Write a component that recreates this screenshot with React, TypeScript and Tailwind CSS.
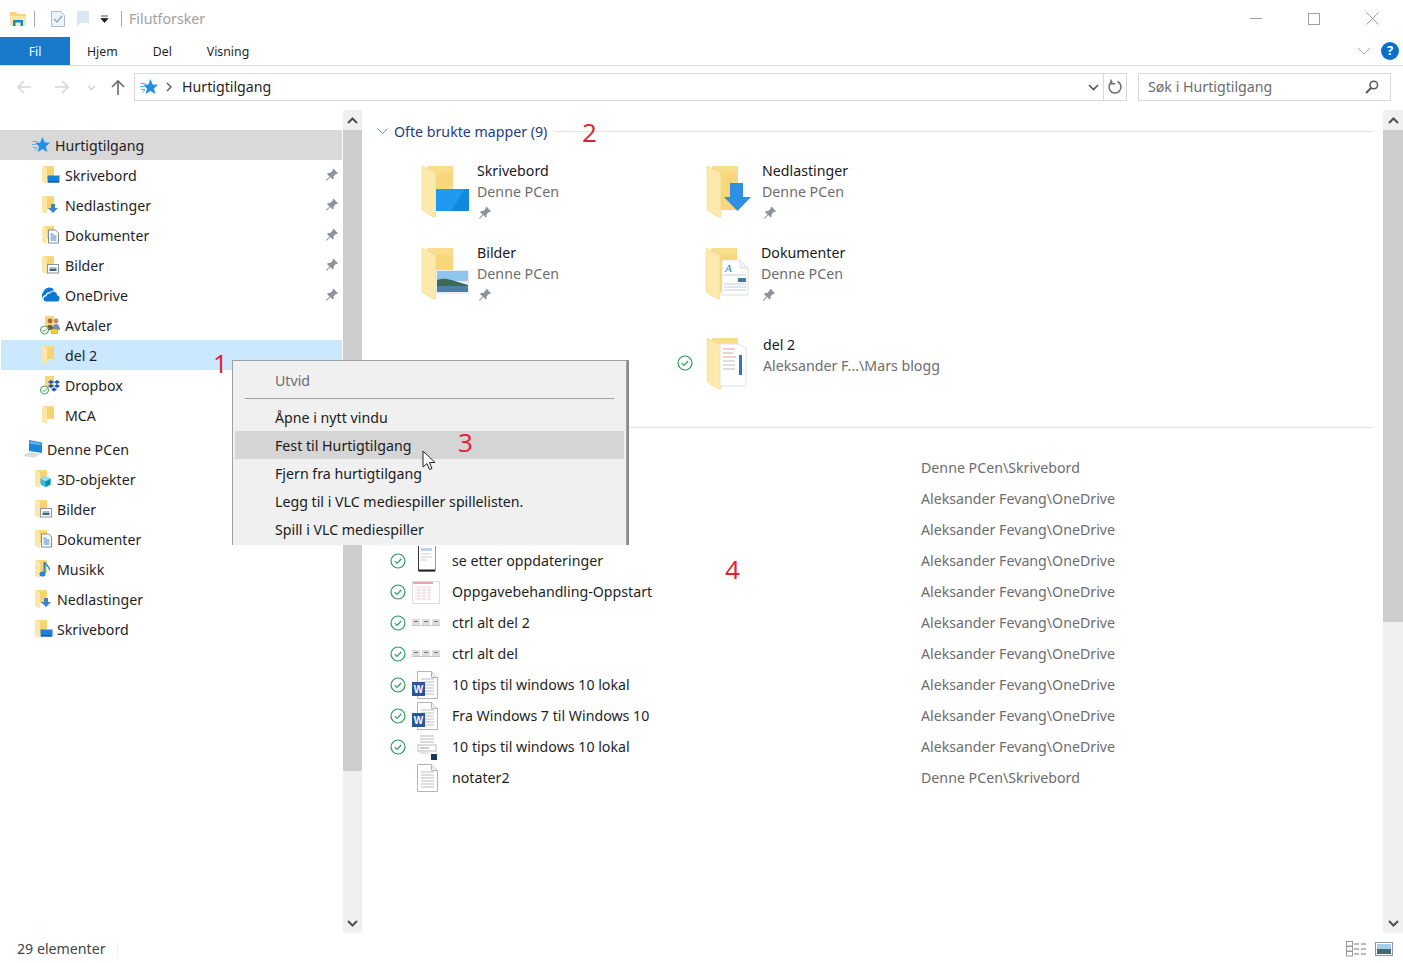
import { ReactNode } from 'react';

type Overlay =
  | 'desktop'
  | 'download'
  | 'docs'
  | 'pictures'
  | 'music'
  | 'cube'
  | 'shared'
  | 'dropbox'
  | 'none';

function Check({ size = 16 }: { size?: number }) {
  return (
    <svg width={size} height={size} viewBox="0 0 16 16" fill="none">
      <circle cx="8" cy="8" r="7" stroke="#2a9d57" strokeWidth="1.2" fill="#fff" />
      <path d="M4.8 8.2l2.2 2.2 4.2-4.4" stroke="#2a9d57" strokeWidth="1.2" />
    </svg>
  );
}

function Pin({ size = 14 }: { size?: number }) {
  return (
    <svg width={size} height={size} viewBox="0 0 14 14">
      <path d="M8.6 0.8l4.6 4.6-1.3 0.7-0.8-0.3-2.6 2.6 0.2 2.2-1 1-2.5-2.6-3.4 3.8-0.8-0.7 3.500-3.700-2.500-2.500 1-1 2.200 0.200 2.600-2.600-0.300-0.800z" fill="#8d949c" />
    </svg>
  );
}

function Star({ size = 18 }: { size?: number }) {
  return (
    <svg width={size} height={size} viewBox="0 0 18 18">
      <path d="M10.500 1l2.200 5.500 5.300 0.300-4 3.600 1.300 5.600-4.800-3-4.800 3 1.300-5.600-4-3.600 5.300-0.300z" fill="#2490e4" />
      <path d="M0.500 5.500h5M0 8.500h4M1 11.500h4M2.500 14.500l2.500-2" stroke="#5aaeea" strokeWidth="1" />
    </svg>
  );
}

function SmallFolder({ overlay = 'none' }: { overlay?: Overlay }) {
  return (
    <svg width="20" height="20" viewBox="0 0 20 20">
      <path d="M3 1h10v13H3z" fill="#f9da7f" />
      <path d="M1 1l5 2v16l-5-2z" fill="#fbe7a8" />
      <path d="M6 3h7v11H6z" fill="#f7d36f" />
      {overlay === 'desktop' && (
        <g>
          <rect x="6.500" y="10.500" width="12" height="7" fill="#1a83d8" />
          <rect x="7" y="16" width="11" height="1.500" fill="#0f5ea8" />
        </g>
      )}
      {overlay === 'download' && <path d="M10 9h4v4h3l-5 5-5-5h3z" fill="#3f83c8" />}
      {overlay === 'docs' && (
        <g>
          <path d="M7.500 5h7l3 3v10h-10z" fill="#fff" stroke="#7c8a96" />
          <path d="M9.500 9h3M9.500 11h6M9.500 13h6M9.500 15h6" stroke="#3d83c6" />
        </g>
      )}
      {overlay === 'pictures' && (
        <g>
          <rect x="6.500" y="9.500" width="11" height="8.500" fill="#fff" stroke="#8b959e" />
          <rect x="8.500" y="12" width="7" height="1" fill="#9cc4e4" />
          <rect x="8.500" y="13.500" width="7" height="2.500" fill="#47627c" />
        </g>
      )}
      {overlay === 'music' && (
        <g>
          <path d="M10.500 3v11" stroke="#1e88d8" strokeWidth="2" />
          <path d="M10.500 3c1 3 5 4 5 8" stroke="#1e88d8" strokeWidth="1.500" fill="none" />
          <ellipse cx="8.500" cy="15" rx="3" ry="2.600" fill="#1e88d8" />
        </g>
      )}
      {overlay === 'cube' && (
        <g>
          <path d="M11.500 7l5 2.600v6l-5 2.600-5-2.600v-6z" fill="#34bdd8" />
          <path d="M11.500 12.200l5-2.600v6l-5 2.600z" fill="#0f8fb0" />
          <path d="M11.500 7l5 2.600-5 2.600-5-2.600z" fill="#9ae4f0" />
        </g>
      )}
    </svg>
  );
}

function Nav({ kind }: { kind: Overlay | 'onedrive' | 'avtaler' | 'pc' | 'star' }) {
  if (kind === 'star') return <Star />;
  if (kind === 'onedrive')
    return (
      <svg width="19" height="16" viewBox="0 0 19 16">
        <path d="M2 5.500C3 2 6 0.500 8.500 0.500c2 0 3.800 1.200 4.500 3-2-0.300-3.500 0.500-4.300 2-1.800-0.500-3.500 0.300-4 2.500-1.500 0-3 1-3 3C0.500 9.500 0.500 7 2 5.500z" fill="#0a78d4" />
        <path d="M5.500 14.500c-1.800 0-3-1-3-2.700 0-1.500 1.200-2.600 3-2.600 0.200-2 1.800-3 3.500-2.500 0.800-1.700 2.500-2.400 4.300-2 1.800 0.400 3 2 2.700 3.800 1.500 0 2.500 1.100 2.500 3 0 1.800-1.200 3-2.500 3z" fill="#0a78d4" />
      </svg>
    );
  if (kind === 'avtaler')
    return (
      <svg width="22" height="20" viewBox="0 0 22 20">
        <path d="M5 1h9v12H5z" fill="#f7d67a" />
        <circle cx="10" cy="6" r="2.400" fill="#a86a3c" />
        <path d="M6.500 15c0-3 1-5 3.500-5s3.500 2 3.500 5z" fill="#6e5a46" />
        <circle cx="16" cy="6" r="2.400" fill="#c68a58" />
        <path d="M12.500 15c0-3 1-6 3.500-6s4 3 4 6z" fill="#6a8fb5" />
        <rect x="11.500" y="14" width="6" height="4.500" fill="#f6cf2f" stroke="#a8891e" strokeWidth="0.500" />
        <circle cx="4.500" cy="15" r="4" fill="#fff" stroke="#3aa04c" />
        <path d="M2.500 15l1.500 1.500 3-3" stroke="#3aa04c" fill="none" />
      </svg>
    );
  if (kind === 'dropbox')
    return (
      <svg width="22" height="20" viewBox="0 0 22 20">
        <path d="M5 1h9v12H5z" fill="#f7d67a" />
        <path d="M11 5l3 2-3 2-3-2zM17 5l3 2-3 2-3-2zM11 9l3 2-3 2-3-2zM17 9l3 2-3 2-3-2zM14 12.500l3 2-3 2-3-2z" fill="#1b57c0" />
        <circle cx="4.500" cy="15" r="4" fill="#fff" stroke="#3aa04c" />
        <path d="M2.500 15l1.500 1.500 3-3" stroke="#3aa04c" fill="none" />
      </svg>
    );
  if (kind === 'pc')
    return (
      <svg width="21" height="20" viewBox="0 0 21 20">
        <path d="M7 1l13 2.500v10.500l-13-2z" fill="#1d86d6" />
        <path d="M7.500 2l11.500 2.200v2l-11.500-1.500z" fill="#5eb4ee" />
        <path d="M7 13l12 2-7 3.500-11-1.500z" fill="#d8dadc" />
      </svg>
    );
  return <SmallFolder overlay={kind} />;
}

const quick: { name: string; kind: Parameters<typeof Nav>[0]['kind']; pinned?: boolean; selected?: boolean }[] = [
  { name: 'Skrivebord', kind: 'desktop', pinned: true },
  { name: 'Nedlastinger', kind: 'download', pinned: true },
  { name: 'Dokumenter', kind: 'docs', pinned: true },
  { name: 'Bilder', kind: 'pictures', pinned: true },
  { name: 'OneDrive', kind: 'onedrive', pinned: true },
  { name: 'Avtaler', kind: 'avtaler' },
  { name: 'del 2', kind: 'none', selected: true },
  { name: 'Dropbox', kind: 'dropbox' },
  { name: 'MCA', kind: 'none' },
];

const pcItems: { name: string; kind: Overlay }[] = [
  { name: '3D-objekter', kind: 'cube' },
  { name: 'Bilder', kind: 'pictures' },
  { name: 'Dokumenter', kind: 'docs' },
  { name: 'Musikk', kind: 'music' },
  { name: 'Nedlastinger', kind: 'download' },
  { name: 'Skrivebord', kind: 'desktop' },
];

function BigFolder({ children }: { children?: ReactNode }) {
  return (
    <svg width="50" height="54" viewBox="0 0 50 54" className="shrink-0">
      <path d="M6 1h26v44H12z" fill="#f9dd8a" />
      <path d="M12 8h20v37H12z" fill="#f8d77c" />
      <path d="M1 1l14 7v44l-3 0-11-7z" fill="#fce9ae" />
      <path d="M1 1l14 7v44l-3 0-11-7z" fill="none" stroke="#efd07a" strokeWidth="0.500" />
      {children}
    </svg>
  );
}

function Tile({ name, sub, className = '', children }: { name: string; sub: string; className?: string; children?: ReactNode }) {
  return (
    <div className={`flex w-[285px] h-[82px] shrink-0 ${className}`}>
      <div className="pt-[5px] w-[56px] shrink-0">
        <BigFolder>{children}</BigFolder>
      </div>
      <div className="flex flex-col">
        <span className="h-[21px] leading-[21px] text-[#1a1a1a]">{name}</span>
        <span className="h-[21px] leading-[21px] text-[#6d6d6d]">{sub}</span>
        <span className="h-[21px] flex items-center pl-[1px]">
          <Pin size={14} />
        </span>
      </div>
    </div>
  );
}

function DocIcon({ children }: { children?: ReactNode }) {
  return (
    <svg width="30" height="30" viewBox="0 0 30 30">
      <path d="M5.500 1.500h14l6 6v21h-20z" fill="#fff" stroke="#b4b4b4" />
      <path d="M19.500 1.500v6h6" fill="#eee" stroke="#b4b4b4" />
      <path d="M9 9h13M9 12h13M9 15h13M9 18h13M9 21h13M9 24h13" stroke="#bdbdbd" />
      {children}
    </svg>
  );
}

function WordIcon() {
  return (
    <DocIcon>
      <rect x="0" y="12" width="13" height="14" fill="#2b579a" />
      <text x="6.500" y="22.500" textAnchor="middle" fontSize="10" fontWeight="700" fill="#fff" fontFamily="Liberation Sans, sans-serif">
        W
      </text>
    </DocIcon>
  );
}

function KeysIcon() {
  return (
    <svg width="30" height="30" viewBox="0 0 30 30">
      <rect x="0" y="11" width="8" height="6" fill="#ddd" />
      <rect x="10" y="11" width="8" height="6" fill="#ddd" />
      <rect x="20" y="11" width="8" height="6" fill="#ddd" />
      <path d="M2 13.500h4M12 13.500h4M22 13.500h4" stroke="#777" />
      <path d="M0 17.500h28" stroke="#c6c6c6" />
    </svg>
  );
}

function DeviceIcon() {
  return (
    <svg width="30" height="30" viewBox="0 0 30 30">
      <rect x="6.500" y="-1" width="17" height="26" fill="#fff" stroke="#999" />
      <path d="M7 24.500h16" stroke="#222" strokeWidth="2" />
      <path d="M6.500 0v25" stroke="#333" />
      <path d="M9 2h11v3H9z" fill="#b8d4ee" />
      <path d="M9 8h9M9 11h11M9 14h6" stroke="#ccc" />
    </svg>
  );
}

function SheetIcon() {
  return (
    <svg width="30" height="30" viewBox="0 0 30 30">
      <rect x="0.500" y="4.500" width="27" height="22" fill="#fff" stroke="#dcdcdc" />
      <path d="M1 6h20" stroke="#e7a6a6" strokeWidth="2" />
      <path d="M3 10h16M3 13h16M3 16h16M3 19h16M3 22h16M7 9v15M12 9v15M17 9v15" stroke="#f0dcdc" />
    </svg>
  );
}

function ThumbIcon() {
  return (
    <svg width="30" height="30" viewBox="0 0 30 30">
      <path d="M8 4h14M8 7h14M8 10h14" stroke="#cfcfcf" strokeWidth="1.500" />
      <rect x="6" y="13" width="18" height="6" fill="#fff" stroke="#bbb" />
      <path d="M8 16h9" stroke="#999" />
      <path d="M8 21h9" stroke="#ccc" />
      <rect x="19" y="22" width="6" height="6" fill="#123b66" />
    </svg>
  );
}

const rows: { name: string; path: string; icon?: ReactNode; synced?: boolean }[] = [
  { name: '', path: 'Denne PCen\\Skrivebord' },
  { name: '', path: 'Aleksander Fevang\\OneDrive' },
  { name: '', path: 'Aleksander Fevang\\OneDrive' },
  { name: 'se etter oppdateringer', path: 'Aleksander Fevang\\OneDrive', icon: <DeviceIcon />, synced: true },
  { name: 'Oppgavebehandling-Oppstart', path: 'Aleksander Fevang\\OneDrive', icon: <SheetIcon />, synced: true },
  { name: 'ctrl alt del 2', path: 'Aleksander Fevang\\OneDrive', icon: <KeysIcon />, synced: true },
  { name: 'ctrl alt del', path: 'Aleksander Fevang\\OneDrive', icon: <KeysIcon />, synced: true },
  { name: '10 tips til windows 10 lokal', path: 'Aleksander Fevang\\OneDrive', icon: <WordIcon />, synced: true },
  { name: 'Fra Windows 7 til Windows 10', path: 'Aleksander Fevang\\OneDrive', icon: <WordIcon />, synced: true },
  { name: '10 tips til windows 10 lokal', path: 'Aleksander Fevang\\OneDrive', icon: <ThumbIcon />, synced: true },
  { name: 'notater2', path: 'Denne PCen\\Skrivebord', icon: <DocIcon /> },
];

function Chevron({ up = false, className = '' }: { up?: boolean; className?: string }) {
  return (
    <svg width="11" height="7" viewBox="0 0 11 7" className={className}>
      <path d={up ? 'M1 6l4.500-4.500L10 6' : 'M1 1l4.500 4.500L10 1'} fill="none" stroke="#505050" strokeWidth="2" />
    </svg>
  );
}

function ScrollBar({ width, thumb }: { width: string; thumb: string }) {
  return (
    <div className={`${width} shrink-0 bg-[#f0f0f0] flex flex-col`}>
      <div className="h-[20px] flex items-center justify-center shrink-0">
        <Chevron up />
      </div>
      <div className={`${thumb} bg-[#cdcdcd] shrink-0`} />
      <div className="flex-1" />
      <div className="h-[20px] flex items-center justify-center shrink-0">
        <Chevron />
      </div>
    </div>
  );
}

function Arrow({ dir, color }: { dir: 'left' | 'right' | 'up'; color: string }) {
  const d = {
    left: 'M15 8H2M8 2L2 8l6 6',
    right: 'M1 8h13M8 2l6 6-6 6',
    up: 'M8 16V2M2 8l6-6 6 6',
  }[dir];
  return (
    <svg width="16" height="17" viewBox="0 0 16 17">
      <path d={d} fill="none" stroke={color} strokeWidth="1.600" />
    </svg>
  );
}

function Mark({ className, children }: { className: string; children: string }) {
  return <span className={`absolute text-[#e2202c] text-[26px] leading-none font-medium font-['Open_Sans'] ${className}`}>{children}</span>;
}

export default function App() {
  return (
    <div className="relative w-[1403px] h-[963px] overflow-hidden bg-white flex flex-col text-[14.2px] font-['Noto_Sans','Open_Sans',sans-serif] text-[#1f1f1f]">
      {/* tittellinje */}
      <div className="h-[37px] flex items-center shrink-0">
        <div className="ml-[9px] w-[18px] h-[18px]">
          <svg width="18" height="18" viewBox="0 0 18 18">
            <path d="M1 2h6l1.500 2H17v12H1z" fill="#f7d774" />
            <path d="M1 6h16v10H1z" fill="#fbe7a6" />
            <path d="M4 16v-6h10v6h-2.500v-3.500h-5V16z" fill="#1b87c9" />
          </svg>
        </div>
        <div className="ml-[7px] w-px h-[16px] bg-[#a8a8a8]" />
        <div className="ml-[15px]">
          <svg width="16" height="18" viewBox="0 0 16 18">
            <path d="M1.500 1.500h9l4 4v11h-13z" fill="#eef3fa" stroke="#a9bbd6" />
            <path d="M4 9l3 3 5-6" fill="none" stroke="#8ba3c4" strokeWidth="1.300" />
          </svg>
        </div>
        <div className="ml-[10px]">
          <svg width="14" height="18" viewBox="0 0 14 18">
            <path d="M1 1h8l4 0v12H5l-4 4z" fill="#dbe5f3" />
          </svg>
        </div>
        <div className="ml-[10px] w-[9px]">
          <svg width="9" height="8" viewBox="0 0 9 8">
            <path d="M1 1h7M1 3.500h7L4.500 7.500z" fill="#222" stroke="#222" strokeWidth="0.800" />
          </svg>
        </div>
        <div className="ml-[12px] w-px h-[16px] bg-[#a8a8a8]" />
        <span className="ml-[7px] text-[#a0a0a0]">Filutforsker</span>
        <div className="ml-auto flex items-center pr-[24px] gap-[46px]">
          <div className="w-[12px] h-px bg-[#a0a0a0]" />
          <div className="w-[12px] h-[12px] border border-[#a0a0a0]" />
          <svg width="13" height="13" viewBox="0 0 13 13">
            <path d="M0.500 0.500l12 12M12.500 0.500l-12 12" stroke="#a0a0a0" />
          </svg>
        </div>
      </div>

      {/* fanelinje */}
      <div className="h-[29px] flex items-center border-b border-[#dadbdc] text-[12.3px] shrink-0">
        <div className="w-[70px] h-[28px] pt-[2px] bg-[#1979ca] text-white flex items-center justify-center">Fil</div>
        <span className="ml-[17px] pt-[2px]">Hjem</span>
        <span className="ml-[35px] pt-[2px]">Del</span>
        <span className="ml-[35px] pt-[2px]">Visning</span>
        <div className="ml-auto flex items-center pr-[4px] gap-[10px]">
          <svg width="14" height="8" viewBox="0 0 14 8">
            <path d="M1 1l6 6 6-6" fill="none" stroke="#a8a8a8" />
          </svg>
          <div className="w-[18px] h-[18px] rounded-full bg-[#0a6fc9] text-white text-[13px] font-bold flex items-center justify-center">?</div>
        </div>
      </div>

      {/* adressefelt */}
      <div className="h-[44px] flex items-start pt-[7px] shrink-0">
        <div className="ml-[16px] mt-[6px]"><Arrow dir="left" color="#d6d6d6" /></div>
        <div className="ml-[22px] mt-[6px]"><Arrow dir="right" color="#d6d6d6" /></div>
        <div className="ml-[17px] mt-[12px]">
          <svg width="9" height="6" viewBox="0 0 9 6"><path d="M1 1l3.500 3.500L8 1" fill="none" stroke="#d0d0d0" strokeWidth="1.300" /></svg>
        </div>
        <div className="ml-[14px] mt-[6px]"><Arrow dir="up" color="#6b6b6b" /></div>
        <div className="ml-[8px] w-[993px] h-[28px] border border-[#d9d9d9] flex items-center">
          <div className="ml-[5px]"><Star /></div>
          <svg width="7" height="10" viewBox="0 0 7 10" className="ml-[8px]"><path d="M1 1l4 4-4 4" fill="none" stroke="#555" strokeWidth="1.300" /></svg>
          <span className="ml-[9px]">Hurtigtilgang</span>
          <svg width="11" height="7" viewBox="0 0 11 7" className="ml-auto mr-[4px]"><path d="M1 1l4.500 4.500L10 1" fill="none" stroke="#555" strokeWidth="1.600" /></svg>
          <div className="w-px h-full bg-[#d9d9d9]" />
          <div className="w-[22px] flex justify-center">
            <svg width="16" height="16" viewBox="0 0 16 16">
              <path d="M5.500 2.500a6 6 0 1 0 5 0" fill="none" stroke="#6b6b6b" strokeWidth="1.500" />
              <path d="M4 0.500v4.200h4.200" fill="none" stroke="#6b6b6b" strokeWidth="1.400" />
            </svg>
          </div>
        </div>
        <div className="ml-[11px] w-[253px] h-[28px] border border-[#d9d9d9] flex items-center pl-[9px] text-[#6d6d6d]">
          <span>Søk i Hurtigtilgang</span>
          <svg width="14" height="14" viewBox="0 0 14 14" className="ml-auto mr-[11px]">
            <circle cx="8.800" cy="5" r="3.800" fill="none" stroke="#555" strokeWidth="1.500" />
            <path d="M6 8L1 13" stroke="#555" strokeWidth="2" />
          </svg>
        </div>
      </div>

      {/* hovedområde */}
      <div className="h-[823px] flex shrink-0">
        <div className="w-[343px] shrink-0 pt-[20px] pr-px">
          <div className="h-[30px] bg-[#d9d9d9] flex items-center pl-[32px] gap-[5px]">
            <Star />
            <span className="pt-[2px]">Hurtigtilgang</span>
          </div>
          {quick.map((item) => (
            <div key={item.name} className={`h-[30px] flex items-center ${item.selected ? 'bg-[#cce8ff] ml-px' : ''}`}>
              <div className={`${item.selected ? 'w-[41px]' : 'w-[42px]'} shrink-0`} />
              <div className="w-[23px] shrink-0 flex justify-center -ml-[3px]">
                <Nav kind={item.kind} />
              </div>
              <span className="ml-[3px] pt-[2px]">{item.name}</span>
              {item.pinned && (
                <span className="ml-auto mr-[3px]">
                  <Pin />
                </span>
              )}
            </div>
          ))}
          <div className="h-[30px] mt-[4px] flex items-center pl-[22px] gap-[4px]">
            <Nav kind="pc" />
            <span className="pt-[2px]">Denne PCen</span>
          </div>
          {pcItems.map((item) => (
            <div key={item.name} className="h-[30px] flex items-center pl-[34px] gap-[3px]">
              <Nav kind={item.kind} />
              <span className="pt-[2px]">{item.name}</span>
            </div>
          ))}
        </div>
        <ScrollBar width="w-[19px]" thumb="h-[641px]" />

        <div className="flex-1 min-w-0 pt-[10px] pr-[10px]">
          <div className="h-[22px] flex items-center pl-[15px]">
            <svg width="11" height="7" viewBox="0 0 11 7"><path d="M0.500 0.500l5 5 5-5" fill="none" stroke="#7a8aa8" /></svg>
            <span className="ml-[6px] pt-[2px] text-[#1f3b8a]">Ofte brukte mapper (9)</span>
            <div className="ml-[8px] flex-1 h-px bg-[#e2e2e2]" />
          </div>
          <div className="mt-[18px] pl-[59px] flex flex-wrap w-[640px]">
            <Tile name="Skrivebord" sub="Denne PCen">
              <rect x="15" y="24" width="33" height="22" fill="#1e9af0" />
              <path d="M30 46l14-22h4v22z" fill="#1187e0" />
            </Tile>
            <Tile name="Nedlastinger" sub="Denne PCen">
              <path d="M24 18h13v14h8L31.500 46 18 32h6z" fill="#2f8fe4" />
            </Tile>
            <Tile name="Bilder" sub="Denne PCen">
              <rect x="15" y="23" width="33" height="24" fill="#e8eef4" />
              <rect x="16" y="24" width="31" height="10" fill="#8fc4ec" />
              <path d="M16 33c8-3 14 0 31 5v2H16z" fill="#3a6a52" />
              <rect x="16" y="39" width="31" height="6" fill="#4d7fa8" />
            </Tile>
            <Tile name="Dokumenter" sub="Denne PCen" className="-ml-px">
              <path d="M17 13h18l8 8v27H17z" fill="#fff" stroke="#d8dfe6" />
              <path d="M35 13v8h8" fill="#eef2f6" stroke="#d8dfe6" />
              <text x="20" y="25" fontSize="11" fontStyle="italic" fill="#2c7cc8" fontFamily="Liberation Serif, serif">A</text>
              <path d="M19 28h22M19 37h22M19 40h22M19 43h22" stroke="#b9d0e4" />
              <rect x="33" y="31" width="8" height="4" fill="#46789e" />
            </Tile>
          </div>
          <div className="mt-[10px] pl-[315px] flex items-start h-[76px]">
            <div className="mt-[21px] w-[29px] shrink-0">
              <Check />
            </div>
            <div className="pt-[3px] w-[57px] shrink-0">
              <BigFolder>
                <path d="M14 7h18l8 4v38H14z" fill="#fff" stroke="#dde2e6" />
                <path d="M17 12h12M17 16h10M17 20h13" stroke="#e3a0a0" />
                <path d="M17 24h12M17 28h12M17 32h12" stroke="#bbb" />
                <rect x="33" y="18" width="3" height="20" fill="#2a78c8" />
              </BigFolder>
            </div>
            <div className="flex flex-col">
              <span className="h-[21px] leading-[21px] text-[#1a1a1a]">del 2</span>
              <span className="h-[21px] leading-[21px] text-[#6d6d6d]">Aleksander F...\Mars blogg</span>
            </div>
          </div>
          <div className="mt-[17px] h-px bg-[#e2e2e2]" />
          <div className="mt-[24px]">
            {rows.map((row, i) => (
              <div key={i} className="h-[31px] flex items-center">
                <div className="w-[28px] ml-[28px] shrink-0">{row.synced && <Check />}</div>
                <div className="w-[30px] h-[30px] -ml-[6px] shrink-0">{row.icon}</div>
                <span className="ml-[10px] w-[469px] shrink-0">{row.name}</span>
                <span className="text-[#6d6d6d]">{row.path}</span>
              </div>
            ))}
          </div>
        </div>
        <ScrollBar width="w-[20px]" thumb="h-[492px]" />
      </div>

      {/* statuslinje */}
      <div className="flex-1 flex items-center pl-[17px] pt-[2px] text-[#444]">
        <span>29 elementer</span>
        <div className="ml-[11px] w-px h-[14px] bg-[#efefef]" />
        <div className="ml-auto flex items-center gap-[9px] pr-[10px]">
          <svg width="20" height="16" viewBox="0 0 20 16">
            <rect x="0.500" y="0.500" width="6" height="4.500" fill="#fff" stroke="#9a9a9a" />
            <rect x="0.500" y="5.500" width="6" height="4.500" fill="#fff" stroke="#9a9a9a" />
            <rect x="0.500" y="10.500" width="6" height="4.500" fill="#fff" stroke="#9a9a9a" />
            <path d="M8 3h5M15 3h5M8 8h5M15 8h5M8 13h5M15 13h5" stroke="#777" />
          </svg>
          <svg width="18" height="14" viewBox="0 0 18 14">
            <rect x="0.500" y="0.500" width="17" height="13" fill="#fff" stroke="#8a97a5" />
            <rect x="2" y="2" width="14" height="5" fill="#a8cdec" />
            <rect x="2" y="7" width="14" height="5" fill="#3f6b6a" />
          </svg>
        </div>
      </div>

      {/* hurtigmeny */}
      <div className="absolute left-[232px] top-[360px] w-[395px] h-[185px] bg-[#f0f0f0] border-t border-x border-[#a0a0a0] shadow-[2px_0_0_#8c8c8c] flex flex-col overflow-hidden">
        <div className="h-[37px] shrink-0 flex items-center pl-[42px] pt-[3px] text-[#6d6d6d]">Utvid</div>
        <div className="h-px mx-[12px] bg-[#a0a0a0] shrink-0" />
        <div className="mt-[4px] flex flex-col mx-[2px] text-[#1a1a1a]">
          {['Åpne i nytt vindu', 'Fest til Hurtigtilgang', 'Fjern fra hurtigtilgang', 'Legg til i VLC mediespiller spillelisten.', 'Spill i VLC mediespiller'].map((label, i) => (
            <div key={label} className={`h-[28px] shrink-0 flex items-center pl-[40px] pt-[2px] ${i === 1 ? 'bg-[#d5d5d5]' : ''}`}>
              {label}
            </div>
          ))}
        </div>
      </div>

      {/* musepeker */}
      <svg width="14" height="21" viewBox="0 0 14 21" className="absolute left-[422px] top-[450px]">
        <path d="M1 1v16l4-3.500 2.500 6 2.500-1-2.500-6H13z" fill="#fff" stroke="#222" strokeWidth="1" />
      </svg>

      <Mark className="left-[213px] top-[350px]">1</Mark>
      <Mark className="left-[582px] top-[119px]">2</Mark>
      <Mark className="left-[458px] top-[429px]">3</Mark>
      <Mark className="left-[725px] top-[556px]">4</Mark>
    </div>
  );
}
